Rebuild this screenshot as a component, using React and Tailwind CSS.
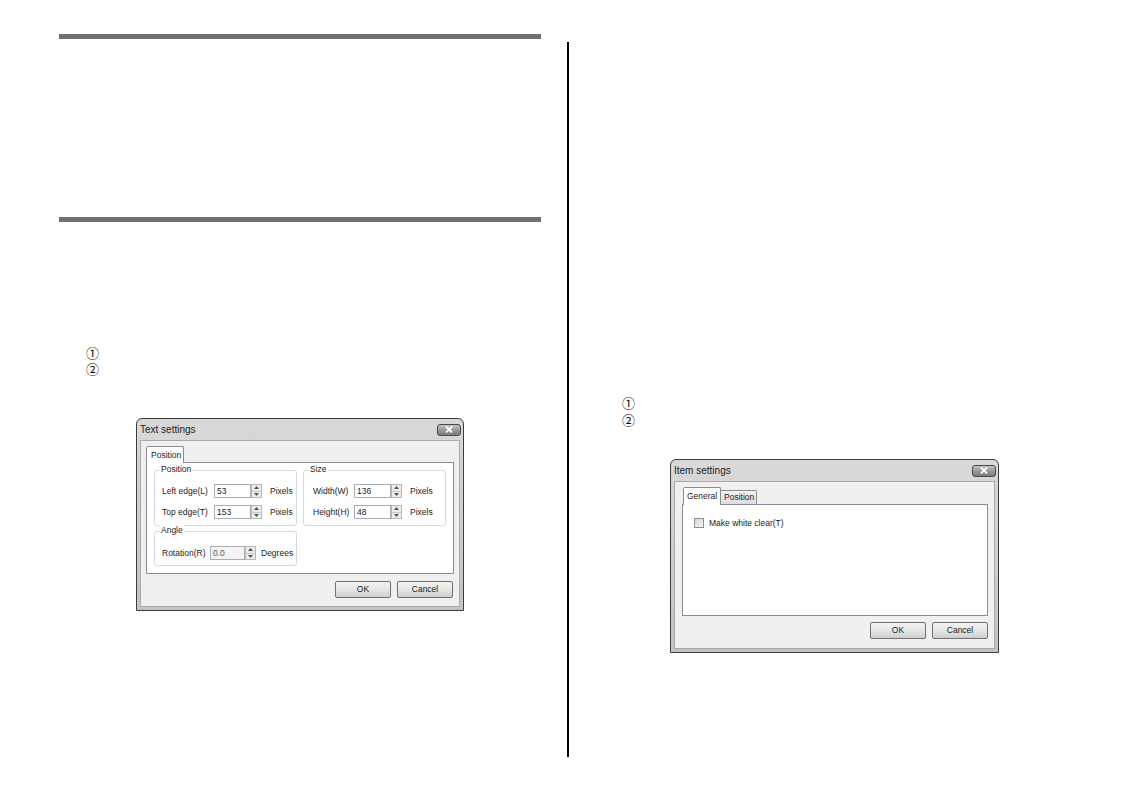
import React from 'react';

const ui = "font-['Liberation_Sans',Arial,sans-serif] text-[#1b1b1b]";

const Circled = ({ leading }) => (
  <div className={`font-['Noto_Sans_CJK_JP','DejaVu_Sans',sans-serif] text-[13px] ${leading} text-black`}>
    <div>①</div>
    <div>②</div>
  </div>
);

const CloseButton = () => (
  <div className="ml-auto mr-[2px] w-[24px] h-[12px] rounded-[3px] border border-[#4b4b4b] bg-gradient-to-b from-[#c4c4c4] via-[#9a9a9a] to-[#7a7a7a] flex items-center justify-center">
    <svg width="8" height="7" viewBox="0 0 8 7">
      <path d="M1 0.5 L7 6.5 M7 0.5 L1 6.5" stroke="#fff" strokeWidth="1.8" />
    </svg>
  </div>
);

// window frame with title bar and client area
const Dialog = ({ title, width, clientHeight, children }) => (
  <div
    className={`${ui} border border-[#3d3d3d] rounded-t-[6px] bg-gradient-to-b from-[#d9d9d9] to-[#c3c3c3] flex flex-col`}
    style={{ width }}
  >
    <div className="h-[21px] flex items-center pl-[3px]">
      <span className="text-[10px] text-[#222]">{title}</span>
      <CloseButton />
    </div>
    <div className="mx-[3px] mb-[3px] bg-[#f0f0f0] border border-[#a9a9a9] flex flex-col" style={{ height: clientHeight }}>
      {children}
    </div>
  </div>
);

const Btn = ({ children }) => (
  <div className="w-[56px] h-[17px] rounded-[2px] border border-[#707070] bg-gradient-to-b from-[#f4f4f4] via-[#e6e6e6] to-[#cfcfcf] flex items-center justify-center text-[8.5px]">
    {children}
  </div>
);

const Spinner = () => (
  <div className="w-[11px] h-[14px] border border-[#b9b9b9] bg-[#ececec] flex flex-col">
    <div className="flex-1 flex items-center justify-center border-b border-[#c9c9c9]">
      <svg width="5" height="3" viewBox="0 0 5 3"><path d="M0 3 L2.5 0 L5 3Z" fill="#555" /></svg>
    </div>
    <div className="flex-1 flex items-center justify-center">
      <svg width="5" height="3" viewBox="0 0 5 3"><path d="M0 0 L2.5 3 L5 0Z" fill="#555" /></svg>
    </div>
  </div>
);

const Field = ({ label, labelW, value, inputW = 'w-[37px]', unit, unitGap = 'ml-[8px]', disabled }) => (
  <div className="h-[14px] flex items-center text-[8.5px]">
    <span className={labelW}>{label}</span>
    <div className={`${inputW} h-[14px] border border-[#abadb3] ${disabled ? 'bg-[#f4f4f4] text-[#555]' : 'bg-white'} flex items-center pl-[2px]`}>
      {value}
    </div>
    <Spinner />
    <span className={unitGap}>{unit}</span>
  </div>
);

const Group = ({ label, className, children }) => (
  <div className={`relative border border-[#d5dbe0] rounded-[3px] ${className}`}>
    <span className="absolute -top-[7px] left-[5px] px-[1px] bg-white text-[8.5px] leading-[11px]">{label}</span>
    {children}
  </div>
);

const TextSettings = () => (
  <Dialog title="Text settings" width="328px" clientHeight="167px">
    <div className="ml-[5px] mt-[5px] flex">
      <div className="relative z-10 w-[38px] h-[17px] border border-b-0 border-[#898c95] bg-white rounded-t-[2px] text-[8.5px] flex items-center pl-[4px]">
        Position
      </div>
    </div>
    <div className="ml-[5px] -mt-[1px] w-[308px] h-[112px] border border-[#898c95] bg-white">
      <div className="flex mt-[7px] ml-[7px] gap-[6px]">
        <Group label="Position" className="w-[143px] h-[56px] pl-[7px] pt-[13px] flex flex-col gap-[7px]">
          <Field label="Left edge(L)" labelW="w-[52px]" value="53" unit="Pixels" />
          <Field label="Top edge(T)" labelW="w-[52px]" value="153" unit="Pixels" />
        </Group>
        <Group label="Size" className="w-[143px] h-[56px] pl-[9px] pt-[13px] flex flex-col gap-[7px]">
          <Field label="Width(W)" labelW="w-[41px]" value="136" unit="Pixels" />
          <Field label="Height(H)" labelW="w-[41px]" value="48" unit="Pixels" />
        </Group>
      </div>
      <Group label="Angle" className="ml-[7px] mt-[5px] w-[143px] h-[35px] pl-[7px] pt-[14px]">
        <Field label="Rotation(R)" labelW="w-[48px]" value="0.0" inputW="w-[35px]" unit="Degrees" unitGap="ml-[5px]" disabled />
      </Group>
    </div>
    <div className="flex justify-end gap-[6px] pr-[6px] mt-[7px]">
      <Btn>OK</Btn>
      <Btn>Cancel</Btn>
    </div>
  </Dialog>
);

const ItemSettings = () => (
  <Dialog title="Item settings" width="329px" clientHeight="168px">
    <div className="ml-[8px] mt-[5px] flex items-end">
      <div className="relative z-10 w-[38px] h-[18px] border border-b-0 border-[#898c95] bg-white rounded-t-[2px] text-[8.5px] flex items-center pl-[3px]">
        General
      </div>
      <div className="w-[36px] h-[15px] border border-l-0 border-[#898c95] bg-gradient-to-b from-[#f2f2f2] to-[#dcdcdc] rounded-tr-[2px] text-[8.5px] flex items-center pl-[3px]">
        Position
      </div>
    </div>
    <div className="ml-[7px] -mt-[1px] w-[306px] h-[112px] border border-[#898c95] bg-white">
      <div className="flex items-center ml-[11px] mt-[12px] text-[8.5px]">
        <div className="w-[10px] h-[10px] border border-[#8f8f8f] bg-gradient-to-br from-[#d8d8d8] to-[#f4f4f4]" />
        <span className="ml-[5px]">Make white clear(T)</span>
      </div>
    </div>
    <div className="flex justify-end gap-[6px] pr-[6px] mt-[6px]">
      <Btn>OK</Btn>
      <Btn>Cancel</Btn>
    </div>
  </Dialog>
);

export default function App() {
  return (
    <div className="w-[1135px] h-[800px] bg-white flex items-start overflow-hidden">
      {/* left column */}
      <div className="ml-[59px] w-[482px] pt-[34px] flex flex-col shrink-0">
        <div className="h-[5px] bg-[#707070]" />
        <div className="h-[5px] bg-[#707070] mt-[178px]" />
        <div className="ml-[27px] mt-[123px]">
          <Circled leading="leading-[16px]" />
        </div>
        <div className="ml-[77px] mt-[41px]">
          <TextSettings />
        </div>
      </div>

      {/* column rule */}
      <div className="ml-[26px] mt-[42px] w-[2px] h-[715px] bg-black shrink-0" />

      {/* right column */}
      <div className="ml-[53px] pt-[394px] flex flex-col shrink-0">
        <Circled leading="leading-[17px]" />
        <div className="ml-[48px] mt-[31px]">
          <ItemSettings />
        </div>
      </div>
    </div>
  );
}
